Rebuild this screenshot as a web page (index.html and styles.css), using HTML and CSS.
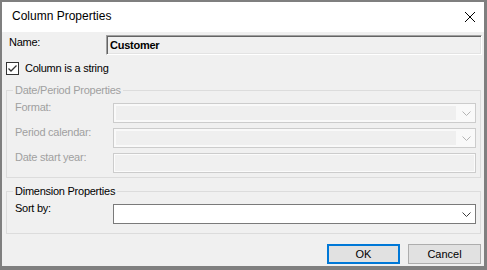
FILE: index.html
```html
<!DOCTYPE html>
<html lang="en">
<head>
  <meta charset="UTF-8" />
  <title>Column Properties</title>
  <link rel="stylesheet" href="styles.css">
</head>
<body>
  <div class="dialog">
    <div class="titlebar">
      <span class="title">Column Properties</span>
      <button class="close" title="Close">
        <svg width="10" height="10" viewBox="0 0 10 10"><path d="M0 0L10 10M10 0L0 10" stroke="#000" stroke-width="1"/></svg>
      </button>
    </div>

    <div class="name-row">
      <label class="name-label">Name:</label>
      <div class="textbox readonly">Customer</div>
    </div>

    <label class="check">
      <svg class="checkbox" width="13" height="13" viewBox="0 0 13 13">
        <rect x="0.5" y="0.5" width="12" height="12" fill="#fff" stroke="#333"/>
        <path d="M2.5 6.5L5 9L10.5 3.5" fill="none" stroke="#333" stroke-width="1.3"/>
      </svg>
      Column is a string
    </label>

    <fieldset class="group disabled">
      <legend>Date/Period Properties</legend>
      <div class="fields">
        <div class="field">
          <label>Format:</label>
          <div class="combo">
            <span class="combo-text"></span>
            <span class="arrow"><svg width="9" height="5" viewBox="0 0 9 5"><path d="M0.5 0.5L4.5 4.5L8.5 0.5" fill="none" stroke="#b4b4b4"/></svg></span>
          </div>
        </div>
        <div class="field">
          <label>Period calendar:</label>
          <div class="combo">
            <span class="combo-text"></span>
            <span class="arrow"><svg width="9" height="5" viewBox="0 0 9 5"><path d="M0.5 0.5L4.5 4.5L8.5 0.5" fill="none" stroke="#b4b4b4"/></svg></span>
          </div>
        </div>
        <div class="field">
          <label>Date start year:</label>
          <div class="textbox"></div>
        </div>
      </div>
    </fieldset>

    <fieldset class="group dimension">
      <legend>Dimension Properties</legend>
      <div class="fields">
        <div class="field">
          <label>Sort by:</label>
          <div class="combo">
            <span class="combo-text"></span>
            <span class="arrow"><svg width="9" height="5" viewBox="0 0 9 5"><path d="M0.5 0.5L4.5 4.5L8.5 0.5" fill="none" stroke="#3c3c3c"/></svg></span>
          </div>
        </div>
      </div>
    </fieldset>

    <div class="actions">
      <button class="btn default">OK</button>
      <button class="btn">Cancel</button>
    </div>
  </div>
</body>
</html>
```

FILE: styles.css
```css
* {
  box-sizing: border-box;
  font-family: 'Liberation Sans', Arial, sans-serif;
}

body {
  margin: 0;
  padding: 2px;
  background: #7f7f7f;
  height: 270px;
  overflow: hidden;
}

.dialog {
  width: 482px;
  height: 264px;
  background: #f0f0f0;
  font-size: 11px;
  line-height: 13px;
  letter-spacing: -0.25px;
  color: #000;
  overflow: hidden;
}

.titlebar {
  height: 30px;
  background: #fff;
  display: flex;
  align-items: center;
  padding: 0 9px 2px 10px;
  letter-spacing: 0;
}

.title {
  flex: 1;
  font-size: 12px;
  line-height: 14px;
}

.close {
  border: none;
  background: none;
  padding: 0;
  width: 10px;
  height: 10px;
  display: flex;
  margin-top: 2px;
}

/* name row */
.name-row {
  display: flex;
  align-items: flex-start;
  margin: 3px 2px 0 7px;
}

.name-label {
  width: 97px;
  padding-top: 1px;
}

.textbox {
  flex: 1;
  height: 20px;
  border: 1px solid #cccccc;
  background: #f0f0f0;
  box-shadow: inset 0 0 0 1px #fbfbfb;
  padding: 0 2px;
  line-height: 18px;
}

.textbox.readonly {
  border-color: #a0a0a0 #ffffff #ffffff #a0a0a0;
  box-shadow: inset 1px 1px 0 #646464, inset -1px -1px 0 #e3e3e3;
  font-weight: bold;
  padding-left: 3px;
}

.check {
  display: flex;
  align-items: center;
  gap: 6px;
  height: 13px;
  margin: 7px 0 0 4px;
}

.checkbox {
  display: block;
}

/* group boxes */
.group {
  margin: 9px 3px 0 4px;
  padding: 0;
  border: 1px solid #dcdcdc;
  min-width: 0;
}

.group legend {
  margin-left: 6px;
  padding: 0 2px;
  line-height: 13px;
}

.group.disabled,
.group.disabled legend {
  color: #a0a0a0;
}

.fields {
  display: flex;
  flex-direction: column;
  gap: 5px;
  padding: 6px 4px 4px 8px;
}

.field {
  display: flex;
  align-items: flex-start;
}

.field label {
  width: 98px;
  margin-top: -2px;
}

.combo {
  flex: 1;
  height: 20px;
  display: flex;
  border: 1px solid #cccccc;
  background: #f9f9f9;
  padding: 2px 0 2px 2px;
}

.combo-text {
  flex: 1;
  background: #efefef;
}

.arrow {
  width: 19px;
  display: flex;
  align-items: center;
  justify-content: center;
  padding-left: 1px;
}

.dimension {
  margin-top: 7px;
}

.dimension .fields {
  padding-bottom: 9px;
}

.dimension .combo {
  border-color: #7a7a7a;
  background: #fff;
}

.dimension .combo-text {
  background: #fff;
}

/* buttons */
.actions {
  display: flex;
  justify-content: flex-end;
  gap: 8px;
  margin: 10px 3px 0 0;
}

.btn {
  width: 73px;
  height: 20px;
  border: 1px solid #adadad;
  background: #e1e1e1;
  font-size: 11px;
  letter-spacing: 0;
  padding: 0;
  color: #000;
}

.btn.default {
  border: 2px solid #0078d7;
}
```
